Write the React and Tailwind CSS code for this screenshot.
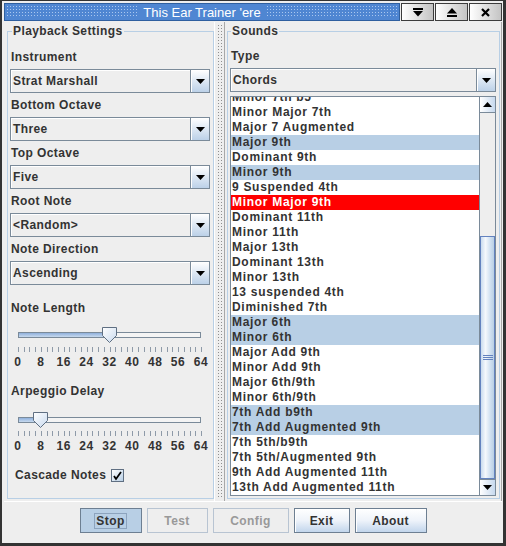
import React from "react";

const FONT = "font-['Liberation_Sans',Arial,sans-serif]";
const TXT = "text-[12px] font-bold text-[#333333] tracking-[0.4px]";

function Down() {
  return (
    <svg width="9" height="5" viewBox="0 0 9 5">
      <path d="M0 0H9L4.5 5Z" fill="#000" />
    </svg>
  );
}
function Up() {
  return (
    <svg width="9" height="5" viewBox="0 0 9 5">
      <path d="M0 5H9L4.5 0Z" fill="#000" />
    </svg>
  );
}

function Combo({ value }) {
  return (
    <div className="flex h-[24px] border border-[#7a8a99] bg-[#eeeeee]">
      <div className={`flex-1 flex items-center pl-[2px] shadow-[inset_1px_1px_0_#ffffff] ${TXT}`}>{value}</div>
      <div className="w-[19px] border-l border-[#7a8a99] bg-gradient-to-b from-[#ffffff] to-[#bcd1e8] flex items-center justify-center pt-[1px] shadow-[inset_1px_1px_0_#ffffff]">
        <Down />
      </div>
    </div>
  );
}

function Label({ children, className = "" }) {
  return <div className={`h-[24px] flex items-center pl-[1px] ${TXT} ${className}`}>{children}</div>;
}

const TICKS = Array.from({ length: 33 }, (_, i) => i);
const LABELS = ["0", "8", "16", "24", "32", "40", "48", "56", "64"];

function Slider({ value, className = "", tickClass = "" }) {
  const x = (value / 64) * 183;
  return (
    <div className={`ml-[8px] w-[183px] ${className}`}>
      <div className="relative h-[16px]">
        <div className="absolute left-0 right-0 top-[5px] h-[6px] border border-[#7a8a99] bg-[#f4f4f4] flex">
          <div className="h-full bg-gradient-to-b from-[#8fb0dc] to-[#c8daee] border-r border-[#6382bf]" style={{ width: x }} />
        </div>
        <svg className="absolute top-0" style={{ left: x - 7.5 }} width="16" height="16" viewBox="0 0 16 16">
          <defs>
            <linearGradient id={`tg${value}`} x1="0" y1="0" x2="1" y2="1">
              <stop offset="0" stopColor="#ffffff" />
              <stop offset="1" stopColor="#c9daee" />
            </linearGradient>
          </defs>
          <path d="M0.5 0.5H14.5V8.5L7.5 15.5L0.5 8.5Z" fill={`url(#tg${value})`} stroke="#5f6f82" />
        </svg>
      </div>
      <svg className={`block ${tickClass}`} width="184" height="5" viewBox="0 0 184 5">
        {TICKS.map((i) => {
          const tx = Math.round((i * 183) / 32) + 0.5;
          return <line key={i} x1={tx} x2={tx} y1={0} y2={5} stroke="#8e9aa8" strokeWidth="1" />;
        })}
      </svg>
      <div className="flex justify-between mt-[4px] h-[12px]">
        {LABELS.map((l) => (
          <div key={l} className="w-0 flex justify-center">
            <span className={`whitespace-nowrap leading-[12px] ${TXT} tracking-[0.6px]`}>{l}</span>
          </div>
        ))}
      </div>
    </div>
  );
}

function Bumps({ className = "" }) {
  return <div className={`bg-[conic-gradient(at_1px_1px,transparent_75%,#a9c7ef_0)] bg-[length:3px_3px] ${className}`} />;
}

function TitleBar() {
  return (
    <div className="flex h-[19px] gap-[1px] pb-[1px]">
      <div className="flex-1 flex items-stretch bg-[#4f86d2] border border-[#2f5f9f] px-[2px] py-[2px]">
        <Bumps className="flex-1" />
        <div className="px-[6px] flex items-center text-[13px] text-white leading-[13px]">This Ear Trainer 'ere</div>
        <Bumps className="flex-1" />
      </div>
      {[0, 1, 2].map((i) => (
        <div
          key={i}
          className="w-[33px] border border-[#3c3c3c] bg-gradient-to-r from-[#ffffff] to-[#c4c4c4] flex items-center justify-center"
        >
          {i === 0 && (
            <svg width="10" height="9" viewBox="0 0 10 9">
              <rect x="0" y="0" width="10" height="2" fill="#000" />
              <path d="M0 3H10L5 8.5Z" fill="#000" />
            </svg>
          )}
          {i === 1 && (
            <svg width="10" height="9" viewBox="0 0 10 9">
              <path d="M0 5.5H10L5 0Z" fill="#000" />
              <rect x="0" y="7" width="10" height="2" fill="#000" />
            </svg>
          )}
          {i === 2 && (
            <svg width="9" height="9" viewBox="0 0 9 9">
              <path d="M1 1L8 8M8 1L1 8" stroke="#000" strokeWidth="2.2" />
            </svg>
          )}
        </div>
      ))}
    </div>
  );
}

function LeftPanel() {
  return (
    <div className="w-[210px] pl-[3px] pt-[2px]">
      <fieldset className="h-[475px] border border-[#b8cfe5] min-w-0">
        <legend className={`ml-[4px] px-[1px] leading-[14px] ${TXT}`}>Playback Settings</legend>
        <div className="pl-[2px] pr-[3px] pt-[7px] flex flex-col">
          <Label>Instrument</Label>
          <Combo value="Strat Marshall" />
          <Label>Bottom Octave</Label>
          <Combo value="Three" />
          <Label>Top Octave</Label>
          <Combo value="Five" />
          <Label>Root Note</Label>
          <Combo value="<Random>" />
          <Label>Note Direction</Label>
          <Combo value="Ascending" />
          <Label className="mt-[11px]">Note Length</Label>
          <Slider value={32} className="mt-[7px]" tickClass="mt-[4px]" />
          <Label className="mt-[11px]">Arpeggio Delay</Label>
          <Slider value={8} className="mt-[9px]" tickClass="mt-[3px]" />
          <div className={`mt-[11px] h-[24px] flex items-center pl-[5px] gap-[5px] ${TXT}`}>
            <span>Cascade Notes</span>
            <div className="w-[13px] h-[13px] border border-[#5f6f82] bg-gradient-to-br from-[#ffffff] to-[#b8cfe5] flex items-center justify-center">
              <svg width="11" height="11" viewBox="0 0 11 11">
                <path d="M2 6L4 9L9 2" stroke="#000" strokeWidth="1.8" fill="none" />
              </svg>
            </div>
          </div>
        </div>
      </fieldset>
    </div>
  );
}

function Divider() {
  return (
    <div className="w-[10px] flex justify-center py-[3px] border-l border-[#ffffff]">
      <div className="w-[5px] ml-[1px] bg-[conic-gradient(at_1px_1px,transparent_75%,#8f8f8f_0)] bg-[length:3px_3px]" />
    </div>
  );
}

const ITEMS = [
  ["Minor 7th b5", 0],
  ["Minor Major 7th", 0],
  ["Major 7 Augmented", 0],
  ["Major 9th", 1],
  ["Dominant 9th", 0],
  ["Minor 9th", 1],
  ["9 Suspended 4th", 0],
  ["Minor Major 9th", 2],
  ["Dominant 11th", 0],
  ["Minor 11th", 0],
  ["Major 13th", 0],
  ["Dominant 13th", 0],
  ["Minor 13th", 0],
  ["13 suspended 4th", 0],
  ["Diminished 7th", 0],
  ["Major 6th", 1],
  ["Minor 6th", 1],
  ["Major Add 9th", 0],
  ["Minor Add 9th", 0],
  ["Major 6th/9th", 0],
  ["Minor 6th/9th", 0],
  ["7th Add b9th", 1],
  ["7th Add Augmented 9th", 1],
  ["7th 5th/b9th", 0],
  ["7th 5th/Augmented 9th", 0],
  ["9th Add Augmented 11th", 0],
  ["13th Add Augmented 11th", 0],
];

const ROW = {
  0: "bg-white text-[#333333]",
  1: "bg-[#b8cfe5] text-[#333333]",
  2: "bg-[#ff0000] text-white",
};

function SoundList() {
  return (
    <div className="mt-[4px] h-[400px] border border-[#7a8a99] flex bg-white">
      <div className="flex-1 overflow-hidden">
        <div className="-mt-[7px]">
          {ITEMS.map(([t, k]) => (
            <div key={t} className={`h-[15px] leading-[15px] pl-[1px] text-[12px] font-bold tracking-[0.7px] whitespace-nowrap ${ROW[k]}`}>
              {t}
            </div>
          ))}
        </div>
      </div>
      <div className="w-[16px] flex flex-col border-l border-[#7a8a99] bg-[#eeeeee]">
        <div className="h-[16px] border-b border-[#7a8a99] bg-gradient-to-r from-[#ffffff] to-[#c7d9ee] flex items-center justify-center">
          <Up />
        </div>
        <div className="h-[123px]" />
        <div className="flex-1 border border-[#6382bf] bg-[linear-gradient(to_right,#c9dbef,#f5f8fc_35%,#d6e4f3_65%,#b8cfe5)] flex items-center justify-center">
          <svg width="10" height="5" viewBox="0 0 10 5">
            <path d="M0 0.5H10M0 2.5H10M0 4.5H10" stroke="#6382bf" strokeWidth="1" />
          </svg>
        </div>
        <div className="h-[16px] border-t border-[#7a8a99] bg-gradient-to-r from-[#ffffff] to-[#c7d9ee] flex items-center justify-center">
          <Down />
        </div>
      </div>
    </div>
  );
}

function RightPanel() {
  return (
    <div className="w-[278px] pl-[2px] pr-[1px] pt-[2px] border-l border-r border-[#a8a8a8]">
      <fieldset className="h-[475px] border border-[#b8cfe5] min-w-0">
        <legend className={`ml-[3px] px-[1px] leading-[14px] ${TXT}`}>Sounds</legend>
        <div className="pl-[2px] pr-[3px] pt-[6px] flex flex-col">
          <Label>Type</Label>
          <Combo value="Chords" />
          <SoundList />
        </div>
      </fieldset>
    </div>
  );
}

function Btn({ w, kind, children }) {
  const base = `h-[25px] flex items-center justify-center ${w} text-[12px] font-bold tracking-[0.4px]`;
  if (kind === "pressed")
    return (
      <div className={`${base} bg-[#b8cfe5] border border-[#6d7f92] text-[#333333]`}>
        <span className="border border-[#8ca3bd] px-[1px] leading-[14px]">{children}</span>
      </div>
    );
  if (kind === "disabled")
    return <div className={`${base} bg-[#eeeeee] border border-[#b8c4d2] text-[#999999]`}>{children}</div>;
  return (
    <div className={`${base} border border-[#6d7f92] text-[#333333] bg-gradient-to-b from-[#ffffff] via-[#eef3fa] to-[#c2d6ec] shadow-[inset_1px_1px_0_#ffffff]`}>
      {children}
    </div>
  );
}

export default function App() {
  return (
    <div
      className={`w-[506px] h-[546px] bg-[#eeeeee] border-l-2 border-r-[3px] border-b-[3px] border-t border-[#333333] pl-[2px] pr-[1px] pt-[2px] flex flex-col ${FONT}`}
    >
      <TitleBar />
      <div className="flex h-[480px] border-b border-[#ffffff]">
        <LeftPanel />
        <Divider />
        <RightPanel />
      </div>
      <div className="flex justify-center gap-[5px] pt-[6px] h-[40px]">
        <Btn w="w-[62px]" kind="pressed">Stop</Btn>
        <Btn w="w-[61px]" kind="disabled">Test</Btn>
        <Btn w="w-[76px]" kind="disabled">Config</Btn>
        <Btn w="w-[56px]">Exit</Btn>
        <Btn w="w-[72px]">About</Btn>
      </div>
    </div>
  );
}
